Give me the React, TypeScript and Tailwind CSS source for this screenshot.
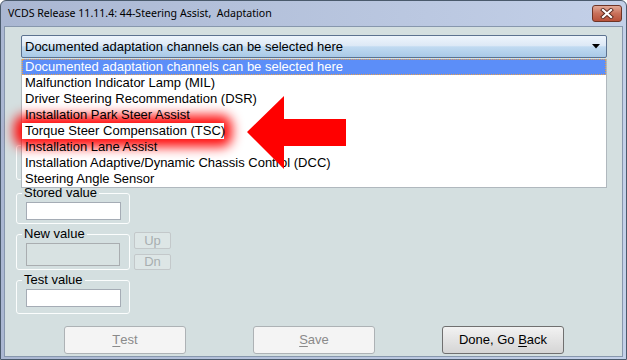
import React from 'react';

const items = [
  'Documented adaptation channels can be selected here',
  'Malfunction Indicator Lamp (MIL)',
  'Driver Steering Recommendation (DSR)',
  'Installation Park Steer Assist',
  'Torque Steer Compensation (TSC)',
  'Installation Lane Assist',
  'Installation Adaptive/Dynamic Chassis Control (DCC)',
  'Steering Angle Sensor',
];

function Group({ label, className, children }: { label: string; className?: string; children?: React.ReactNode }) {
  return (
    <div className={`relative w-[114px] rounded-[3px] border border-[#fbfdfd] pl-[9px] pt-[8px] ${className || ''}`}>
      <span className="absolute -top-[8px] left-[5px] bg-[#d4dfe0] px-[2px] text-[13px] leading-[14px] text-black">{label}</span>
      {children}
    </div>
  );
}

function WinButton({ label, disabled }: { label: string; disabled?: boolean }) {
  const first = label[0];
  const rest = label.slice(1);
  return (
    <div
      className={`flex h-[28px] w-[122px] items-center justify-center rounded-[3px] border text-[13px] ${
        disabled
          ? 'border-[#adb2b5] bg-[#f4f4f4] text-[#8a8a8a]'
          : 'border-[#707070] bg-gradient-to-b from-[#f2f2f2] to-[#d5d5d5] text-black'
      }`}
    >
      <span className="underline decoration-1 underline-offset-2">{first}</span>
      {rest}
    </div>
  );
}

export default function App() {
  return (
    <div className="h-[360px] w-[627px] bg-white font-['Liberation_Sans',Arial,sans-serif]">
      <div className="flex h-full flex-col rounded-t-[6px] border border-[#4a5a6c] bg-gradient-to-r from-[#aab7d2] to-[#c3d0e8]">
        {/* title bar */}
        <div className="flex h-[25px] items-start">
          <span className="pl-[7px] pt-[5px] font-['Noto_Sans',sans-serif] text-[10.6px] leading-[14px] text-black">
            VCDS Release 11.11.4: 44-Steering Assist,&nbsp; Adaptation
          </span>
          <div className="ml-auto mr-[4px] mt-[4px] flex h-[17px] w-[30px] items-center justify-center rounded-[3px] border border-[#6e3426] bg-gradient-to-b from-[#e2a997] via-[#c8705a] to-[#b8513a]">
            <svg width="14" height="11" viewBox="0 0 14 11">
              <path d="M3 2 L11 9 M11 2 L3 9" stroke="#5a2a20" strokeWidth="4" strokeLinecap="square" />
              <path d="M3 2 L11 9 M11 2 L3 9" stroke="#ffffff" strokeWidth="2.2" strokeLinecap="square" />
            </svg>
          </div>
        </div>

        {/* client area */}
        <div className="relative mx-[3px] mb-[2px] flex-1 border border-[#8797ad] bg-[#d4dfe0]">
          <div className="flex flex-col pl-[11px] pt-[8px]">
            {/* combo */}
            <div className="ml-[5px] flex h-[23px] w-[586px] items-center rounded-[2px] border border-[#5c7290] bg-[linear-gradient(to_bottom,#eef5fc_0%,#dde9f6_45%,#c0daf1_52%,#a9c9e7_100%)] pl-[3px] pr-[6px] text-[13px] text-black">
              <span>Documented adaptation channels can be selected here</span>
              <svg className="ml-auto" width="8" height="5" viewBox="0 0 8 5">
                <polygon points="0,0 8,0 4,4.5" fill="#000" />
              </svg>
            </div>

            {/* group box hidden under the list */}
            <div className="mt-[87px] h-[35px] w-[300px] rounded-[3px] border border-[#fbfdfd]" />

            <Group label="Stored value" className="mt-[13px] pb-[3px]">
              <div className="h-[18px] w-[95px] border border-[#a5acb5] bg-white" />
            </Group>

            <div className="mt-[10px] flex items-start gap-[4px]">
              <Group label="New value" className="pb-[3px]">
                <div className="h-[23px] w-[94px] border border-[#a9adb0] bg-[#d8e2e2]" />
              </Group>
              <div className="-mt-[2px] flex flex-col gap-[5px]">
                <div className="flex h-[17px] w-[37px] items-center justify-center rounded-[2px] border border-[#c3c8ca] bg-[#dde6e6] text-[13px] text-[#a8aeb0]">
                  Up
                </div>
                <div className="flex h-[16px] w-[37px] items-center justify-center rounded-[2px] border border-[#c3c8ca] bg-[#dde6e6] text-[13px] text-[#a8aeb0]">
                  Dn
                </div>
              </div>
            </div>

            <Group label="Test value" className="mt-[10px] pb-[6px]">
              <div className="h-[18px] w-[95px] border border-[#a5acb5] bg-white" />
            </Group>

            <div className="mt-[12px] flex gap-[67px] pl-[48px]">
              <WinButton label="Test" disabled />
              <WinButton label="Save" disabled />
              <div className="flex h-[28px] w-[122px] items-center justify-center rounded-[3px] border border-[#707070] bg-gradient-to-b from-[#f2f2f2] to-[#d5d5d5] text-[13px] text-black">
                Done, Go&nbsp;<span className="underline decoration-1 underline-offset-2">B</span>ack
              </div>
            </div>
          </div>

          {/* open dropdown list */}
          <div className="absolute left-[16px] top-[32px] w-[586px] border border-t-0 border-[#b0b8be] bg-white text-[13px] leading-[16px] text-black">
            <div className="absolute left-0 top-[64px] h-[16px] w-[202px] rounded-[4px] shadow-[0_0_12px_8px_rgba(255,0,0,0.95)]" />
            {items.map((t, i) => {
              if (i === 0)
                return (
                  <div key={t} className="relative h-[16px] whitespace-nowrap border border-dotted border-[#e9a04c] bg-[#5c8ef8] pl-[2px] leading-[14px] text-white">
                    {t}
                  </div>
                );
              if (i === 4)
                return (
                  <div key={t} className="relative h-[16px] whitespace-nowrap">
                    <span className="inline-block h-[16px] w-[202px] whitespace-nowrap bg-white pl-[3px]">{t}</span>
                  </div>
                );
              return (
                <div key={t} className="relative h-[16px] whitespace-nowrap pl-[3px]">
                  {t}
                </div>
              );
            })}
          </div>

          {/* red arrow */}
          <svg className="absolute left-[235px] top-[63px]" width="110" height="85" viewBox="0 0 110 85">
            <polygon points="7,42 44,6 44,29 106,29 106,56 44,56 44,79" fill="#ff0000" />
          </svg>
        </div>
      </div>
    </div>
  );
}
